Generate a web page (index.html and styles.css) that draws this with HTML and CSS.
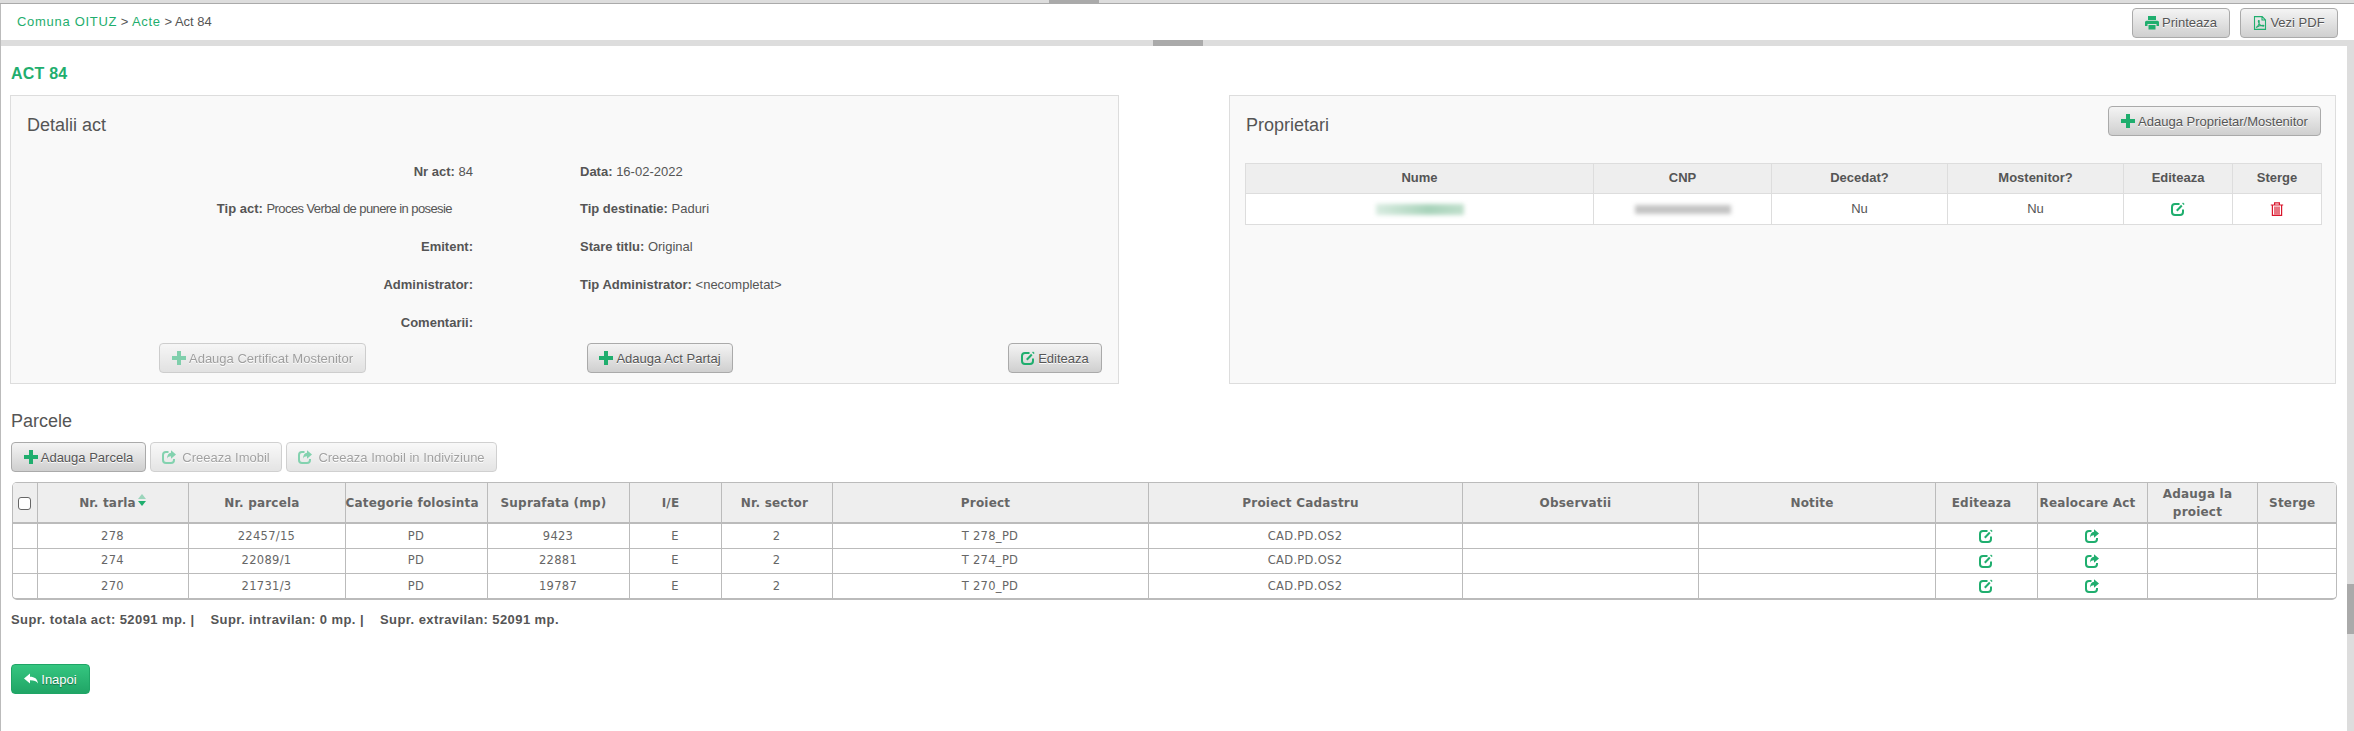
FILE: index.html
```html
<!DOCTYPE html>
<html lang="ro">
<head>
<meta charset="utf-8">
<title>Act 84</title>
<link rel="stylesheet" href="styles.css">
</head>
<body>
<svg class="sprite" width="0" height="0">
  <symbol id="i-plus" viewBox="0 0 14 14"><path d="M5 0h4v5h5v4H9v5H5V9H0V5h5z"/></symbol>
  <symbol id="i-print" viewBox="0 0 14 14"><path d="M3 0h8v4H3zM1.500 4.800h11A1.500 1.500 0 0 1 14 6.300V10h-2.500V8h-9v2H0V6.300A1.500 1.500 0 0 1 1.500 4.800zM3.500 9h7v4.500h-7z"/></symbol>
  <symbol id="i-pdf" viewBox="0 0 14 14"><path fill="none" stroke="currentColor" stroke-width="1.100" d="M1.500.6h7.700l3.300 3.300v9.500h-11zM9 .8V4h3.300M3 11.500c2-1 3.500-4 3.200-6.500-.3-1-1-.5-.8.700.5 2.500 2.500 4.300 5 4.500.8-.2.700-1-.3-1-2.500 0-5 1-7.100 2.300z"/></symbol>
  <symbol id="i-edit" viewBox="0 0 14 14"><path fill="none" stroke="currentColor" stroke-width="2" d="M8.500 2H4A3 3 0 0 0 1 5v5a3 3 0 0 0 3 3h5a3 3 0 0 0 3-3V7.500"/><path fill="none" stroke="currentColor" stroke-width="2" d="M5.800 8.700l5-5.200"/><path d="M12 .5l1.600 1.500-1 1-1.500-1.500z"/></symbol>
  <symbol id="i-share" viewBox="0 0 14 14"><path fill="none" stroke="currentColor" stroke-width="2" d="M6.500 2H4A3 3 0 0 0 1 5v5a3 3 0 0 0 3 3h5a3 3 0 0 0 3-3V9"/><path d="M9 .3L14 4.500 9 8.700V6.300C7.200 6.300 5.800 7 5 8.800c0-3.700 1.500-5.800 4-6.100z"/></symbol>
  <symbol id="i-trash" viewBox="0 0 14 14"><path fill="none" stroke="currentColor" stroke-width="1.200" d="M.8 3h12.400M4.600 3V.8h4.800V3M2.400 3v10.400h9.200V3M5 4.500v8M7 4.500v8M9 4.500v8"/></symbol>
  <symbol id="i-reply" viewBox="0 0 14 14"><path d="M6 1.500v3.200c4.500 0 7.500 2 8 6.800-1.300-2.500-3.800-3.300-8-3.300v3.300L0 6.500z"/></symbol>
</svg>

<div class="frame">
  <div class="top-line"><span class="handle-top"></span></div>
  <div class="app">
    <div class="main">
      <header class="toolbar">
        <nav class="crumbs"><a href="#">Comuna OITUZ</a> &gt; <a href="#">Acte</a> &gt; Act 84</nav>
        <div class="toolbar-actions">
          <button class="btn btn-wide"><svg class="ico green"><use href="#i-print"/></svg>Printeaza</button>
          <button class="btn btn-wide"><svg class="ico green"><use href="#i-pdf"/></svg>Vezi PDF</button>
        </div>
      </header>
      <div class="strip"><span class="handle"></span></div>

      <section class="content">
        <h1 class="page-title">ACT 84</h1>

        <div class="panels">
          <div class="panel panel-details">
            <h2 class="panel-title">Detalii act</h2>
            <div class="details">
              <div class="cell"><b>Nr act:</b> 84</div><div class="cell-r"><b>Data:</b> 16-02-2022</div>
              <div class="cell shifted"><b>Tip act:</b> <span class="tight">Proces Verbal de punere in posesie</span></div><div class="cell-r"><b>Tip destinatie:</b> Paduri</div>
              <div class="cell"><b>Emitent:</b></div><div class="cell-r"><b>Stare titlu:</b> Original</div>
              <div class="cell"><b>Administrator:</b></div><div class="cell-r"><b>Tip Administrator:</b> &lt;necompletat&gt;</div>
              <div class="cell"><b>Comentarii:</b></div><div class="cell-r"></div>
            </div>
            <div class="details-actions">
              <button class="btn btn-cert" disabled><svg class="ico green"><use href="#i-plus"/></svg>Adauga Certificat Mostenitor</button>
              <button class="btn btn-partaj"><svg class="ico green"><use href="#i-plus"/></svg>Adauga Act Partaj</button>
              <button class="btn btn-edit"><svg class="ico green"><use href="#i-edit"/></svg>Editeaza</button>
            </div>
          </div>

          <div class="panel panel-owners">
            <div class="owners-head">
              <h2 class="panel-title">Proprietari</h2>
              <button class="btn btn-owner"><svg class="ico green"><use href="#i-plus"/></svg>Adauga Proprietar/Mostenitor</button>
            </div>
            <table class="owners">
              <colgroup><col class="o1"><col class="o2"><col class="o3"><col class="o4"><col class="o5"><col class="o6"></colgroup>
              <thead><tr><th>Nume</th><th>CNP</th><th>Decedat?</th><th>Mostenitor?</th><th>Editeaza</th><th>Sterge</th></tr></thead>
              <tbody><tr>
                <td><span class="blur blur-name"></span></td>
                <td><span class="blur blur-cnp"></span></td>
                <td>Nu</td><td>Nu</td>
                <td><svg class="ico-cell green"><use href="#i-edit"/></svg></td>
                <td><svg class="ico-cell red"><use href="#i-trash"/></svg></td>
              </tr></tbody>
            </table>
          </div>
        </div>

        <h2 class="section-title">Parcele</h2>
        <div class="parcel-actions">
          <button class="btn btn-add"><svg class="ico green"><use href="#i-plus"/></svg>Adauga Parcela</button>
          <button class="btn btn-imobil" disabled><svg class="ico ico-share green"><use href="#i-share"/></svg>Creeaza Imobil</button>
          <button class="btn btn-indiv" disabled><svg class="ico ico-share green"><use href="#i-share"/></svg>Creeaza Imobil in Indiviziune</button>
        </div>

        <div class="grid-wrap">
          <table class="grid">
            <colgroup>
              <col class="c1"><col class="c2"><col class="c3"><col class="c4"><col class="c5"><col class="c6"><col class="c7"><col class="c8"><col class="c9"><col class="c10"><col class="c11"><col class="c12"><col class="c13"><col class="c14"><col class="c15">
            </colgroup>
            <thead>
              <tr>
                <th class="plain"><span class="check"></span></th>
                <th class="plain">Nr. tarla<svg class="sort" viewBox="0 0 8 12"><path class="sort-up" d="M4 0l4 5H0z"/><path d="M0 7h8l-4 5z"/></svg></th>
                <th>Nr. parcela</th><th class="nowrap">Categorie folosinta</th><th>Suprafata (mp)</th><th>I/E</th><th class="sector">Nr. sector</th><th>Proiect</th><th>Proiect Cadastru</th><th>Observatii</th><th>Notite</th><th>Editeaza</th><th class="nowrap">Realocare Act</th><th>Adauga la proiect</th><th>Sterge</th>
              </tr>
            </thead>
            <tbody>
              <tr><td></td><td>278</td><td>22457/15</td><td>PD</td><td>9423</td><td>E</td><td>2</td><td>T 278_PD</td><td>CAD.PD.OS2</td><td></td><td></td><td><svg class="ico-cell green"><use href="#i-edit"/></svg></td><td><svg class="ico-cell green"><use href="#i-share"/></svg></td><td></td><td></td></tr>
              <tr><td></td><td>274</td><td>22089/1</td><td>PD</td><td>22881</td><td>E</td><td>2</td><td>T 274_PD</td><td>CAD.PD.OS2</td><td></td><td></td><td><svg class="ico-cell green"><use href="#i-edit"/></svg></td><td><svg class="ico-cell green"><use href="#i-share"/></svg></td><td></td><td></td></tr>
              <tr><td></td><td>270</td><td>21731/3</td><td>PD</td><td>19787</td><td>E</td><td>2</td><td>T 270_PD</td><td>CAD.PD.OS2</td><td></td><td></td><td><svg class="ico-cell green"><use href="#i-edit"/></svg></td><td><svg class="ico-cell green"><use href="#i-share"/></svg></td><td></td><td></td></tr>
            </tbody>
          </table>
        </div>

        <p class="totals"><span>Supr. totala act: 52091 mp. |</span><span>Supr. intravilan: 0 mp. |</span><span>Supr. extravilan: 52091 mp.</span></p>

        <button class="btn btn-back"><svg class="ico"><use href="#i-reply"/></svg>Inapoi</button>
      </section>
    </div>
    <div class="scrollbar"><span class="thumb"></span></div>
  </div>
</div>
</body>
</html>
```
FILE: styles.css
```css
* { box-sizing: border-box; }
html, body { margin: 0; height: 100%; overflow: hidden; background: #fff; }
body { font: 12px/1.4 "Liberation Sans", Arial, sans-serif; color: #555; }
.sprite { position: absolute; }

.frame { height: 731px; display: flex; flex-direction: column; }
.top-line { height: 4px; flex: none; background: #ddd; border-bottom: 1px solid #aaa; }
.handle-top { display: block; width: 50px; height: 3px; margin-left: 1049px; background: #aaa; }

.app { flex: 1; display: flex; min-height: 0; }
.main { flex: 1; min-width: 0; border-left: 1px solid #bbb; }
.scrollbar { width: 7px; flex: none; background: #ddd; margin-top: 42px; padding-top: 538px; }
.thumb { display: block; height: 50px; background: #aaa; }

.toolbar { height: 36px; display: flex; justify-content: space-between; align-items: center; padding: 0 9px 0 16px; margin-right: -7px; position: relative; z-index: 1; }
.crumbs { font-size: 13px; color: #555; }
.crumbs a { color: #1fae6e; text-decoration: none; letter-spacing: .7px; }
.toolbar-actions { display: flex; gap: 10px; margin-top: 1px; margin-right: 7px; }
.strip { height: 6px; background: #ddd; margin-right: -7px; position: relative; z-index: 1; display: flex; }
.handle { width: 50px; height: 6px; margin-left: 1152px; background: #aaa; }

.content { padding: 0 10px 0 9px; }
.page-title { margin: 17px 0 11px 1px; font-size: 16px; line-height: 21px; color: #1fae6e; font-weight: bold; letter-spacing: .2px; }

.panels { display: grid; grid-template-columns: 1109px 1107px; column-gap: 110px; }
.panel { height: 289px; background: #f9f9f9; border: 1px solid #ddd; }
.panel-title { margin: 0; font-size: 18px; line-height: 24px; font-weight: normal; color: #555; }
.panel-details { padding: 17px 16px 0 16px; }

.details { display: grid; grid-template-columns: 446px 1fr; grid-auto-rows: 37.7px; margin-top: 16px; align-items: center; font-size: 13px; }
.cell { text-align: right; }
.cell.shifted { padding-right: 21px; }
.tight { letter-spacing: -.58px; }
.cell-r { padding-left: 107px; }
.details b { color: #555; }

.details-actions { display: flex; margin-top: 2px; }
.btn-cert { margin-left: 132px; width: 207px; }
.btn-partaj { margin-left: 221px; width: 146px; }
.btn-edit { margin-left: 275px; width: 94px; }

.btn {
  height: 30px; padding: 0 11px; display: inline-flex; align-items: center; justify-content: center; white-space: nowrap;
  font: 13px "Liberation Sans", Arial, sans-serif; color: #555; text-shadow: 0 1px 0 #fff;
  background: linear-gradient(#f4f4f4, #cfcfcf); border: 1px solid #aaa; border-radius: 4px;
}
.btn[disabled] { opacity: .55; }
.btn-wide { width: 98px; padding: 0; }
.ico { width: 14px; height: 14px; margin-right: 3px; fill: currentColor; flex: none; }
.ico-share { margin-right: 6px; }
.green { color: #1fae6e; fill: #1fae6e; }
.red { color: #d9162c; fill: #d9162c; }

.panel-owners { padding: 10px 14px 0 15px; }
.owners-head { height: 57px; display: flex; justify-content: space-between; align-items: flex-start; }
.owners-head .panel-title { margin-top: 7px; margin-left: 1px; }
.btn-owner { width: 213px; padding: 0; }

.owners { table-layout: fixed; border-collapse: collapse; width: 1076px; background: #fff; }
.o1 { width: 348px; } .o2 { width: 178px; } .o3 { width: 176px; } .o4 { width: 176px; } .o5 { width: 109px; } .o6 { width: 89px; }
.owners th, .owners td { border: 1px solid #ddd; text-align: center; padding: 0; font-size: 13px; }
.owners th { height: 30px; background: #eee; font-weight: bold; color: #555; }
.owners td { height: 31px; }
.ico-cell { width: 14px; height: 14px; vertical-align: middle; }
.blur { display: inline-block; filter: blur(2px); vertical-align: middle; }
.blur-name { width: 88px; height: 11px; background: linear-gradient(90deg, #d8ebe0, #a8d3ba 60%, #c0dfcc); }
.blur-cnp { width: 96px; height: 9px; background: #c4c4c4; }

.section-title { margin: 24px 0 8px 1px; font-size: 18px; line-height: 26px; font-weight: normal; color: #555; }
.parcel-actions { display: flex; gap: 4px; margin-left: 1px; }
.btn-add { width: 135px; padding: 0; }
.btn-imobil { width: 132px; padding: 0; }
.btn-indiv { width: 211px; padding: 0; }

.grid-wrap { margin: 10px 0 0 2px; width: 2325px; border: 1px solid #bbb; border-bottom-width: 2px; border-radius: 5px; overflow: hidden; }
.grid { table-layout: fixed; border-collapse: collapse; width: 2323px; background: #fff; font-family: "DejaVu Sans", Verdana, sans-serif; }
.c1 { width: 24px; } .c2 { width: 151px; } .c3 { width: 157px; } .c4 { width: 142px; } .c5 { width: 142px; } .c6 { width: 92px; } .c7 { width: 111px; } .c8 { width: 316px; } .c9 { width: 314px; } .c10 { width: 236px; } .c11 { width: 237px; } .c12 { width: 102px; } .c13 { width: 110px; } .c14 { width: 110px; } .c15 { width: 79px; }
.grid th, .grid td { border: 1px solid #bbb; text-align: center; padding: 0; }
.grid tr > :first-child { border-left: 0; }
.grid tr > :last-child { border-right: 0; }
.grid thead th { border-top: 0; }
.grid tbody tr:last-child td { border-bottom: 0; }
.grid th { height: 40px; padding-right: 9px; background: #eee; font-size: 12px; line-height: 18px; font-weight: bold; color: #666; letter-spacing: .2px; position: relative; border-bottom-width: 2px; }
.grid th.plain { padding-right: 0; }
.grid th.sector { padding-right: 4px; }
.grid th.nowrap { white-space: nowrap; }
.grid td { height: 25px; font-size: 11.500px; color: #666; letter-spacing: .3px; }
.grid .ico-cell { width: 14px; height: 14px; }
.check { display: inline-block; width: 13px; height: 13px; border: 1px solid #666; border-radius: 3px; background: #fff; vertical-align: middle; }
.sort { width: 8px; height: 12px; margin-left: 2px; vertical-align: 1px; fill: #1fae6e; }
.sort-up { opacity: .4; }

.totals { margin: 11px 0 0 1px; display: flex; font-size: 13px; line-height: 17px; font-weight: bold; color: #555; letter-spacing: .42px; }
.totals span { margin-right: 16px; }

.btn-back { display: flex; margin: 36px 0 0 1px; width: 79px; padding: 0; color: #fff; text-shadow: 0 1px 1px rgba(0,0,0,.4); background: linear-gradient(#35c680, #20a566); border-color: #1fa566; }
```
